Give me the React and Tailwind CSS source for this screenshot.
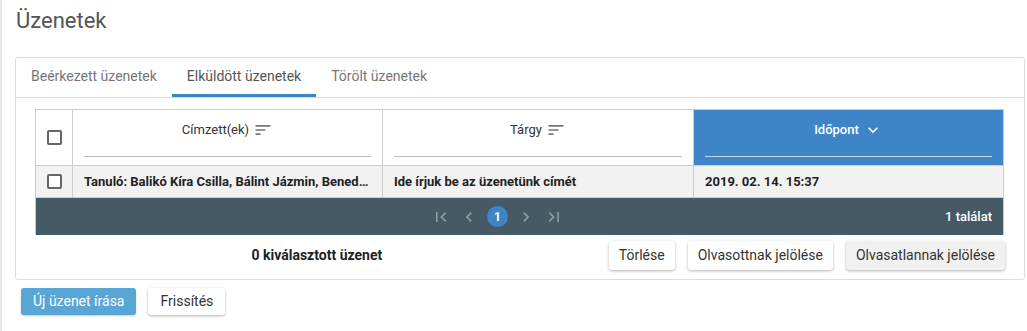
import React from 'react';

const SortIcon = () => (
  <svg width="20" height="20" viewBox="0 0 24 24" className="fill-[#777]">
    <path d="M3 18h6v-2H3v2zM3 6v2h18V6H3zm0 7h12v-2H3v2z" />
  </svg>
);

const ChevronDown = () => (
  <svg width="20" height="20" viewBox="0 0 24 24" className="fill-white">
    <path d="M16.59 8.59L12 13.17 7.41 8.59 6 10l6 6 6-6z" />
  </svg>
);

const PageIcon = ({ d }) => (
  <svg width="20" height="20" viewBox="0 0 24 24" className="fill-[#8c9ca5]">
    <path d={d} />
  </svg>
);

const Checkbox = () => (
  <div className="w-[15px] h-[15px] border-2 border-[#666] rounded-[2px] bg-white" />
);

function FilterHeader({ label }) {
  return (
    <div className="flex flex-col h-full px-[11px]">
      <div className="flex items-center justify-center gap-[4px] h-[38px] pt-[1px] text-[13px] text-[#333]">
        <span>{label}</span>
        <SortIcon />
      </div>
      <div className="mt-[8px] border-b border-[#bbb]" />
    </div>
  );
}

function Btn({ children, gray }) {
  return (
    <button
      className={
        'h-[29px] px-[10px] rounded-[3px] text-[14px] text-[#333] shadow-[0_1px_3px_rgba(0,0,0,0.3)] ' +
        (gray ? 'bg-[#f1f1f1]' : 'bg-white')
      }
    >
      {children}
    </button>
  );
}

export default function App() {
  const tabs = ['Beérkezett üzenetek', 'Elküldött üzenetek', 'Törölt üzenetek'];

  return (
    <div
      className="min-h-[331px] bg-white border-l-2 border-[#e8e8e8] pl-[13px] pr-[2px]"
      style={{ fontFamily: 'Roboto, "Liberation Sans", sans-serif' }}
    >
      <h1 className="h-[57px] pt-[6px] pl-[1px] text-[22px] leading-[30px] text-[#555]">Üzenetek</h1>

      {/* card */}
      <div className="w-[1010px] border border-[#ddd] rounded-[3px]">
        <div className="flex h-[40px] border-b border-[#ddd]">
          {tabs.map((t, i) => (
            <div
              key={t}
              className={
                'flex items-center px-[15px] text-[14px] border-b-[3px] ' +
                (i === 1 ? 'border-[#3d86c6] text-[#555]' : 'border-transparent text-[#777]')
              }
            >
              {t}
            </div>
          ))}
        </div>

        <div className="px-[19px] pt-[11px] pb-[9px]">
          {/* table */}
          <div className="w-[969px] border-l border-r border-t border-[#ccc]">
            <div className="grid grid-cols-[37px_310px_311px_1fr] h-[56px] border-b border-[#ccc]">
              <div className="flex items-center justify-center border-r border-[#ccc]">
                <Checkbox />
              </div>
              <div className="border-r border-[#ccc]">
                <FilterHeader label="Címzett(ek)" />
              </div>
              <div className="border-r border-[#ccc]">
                <FilterHeader label="Tárgy" />
              </div>
              <div className="flex flex-col px-[11px] bg-[#3d85c6]">
                <div className="flex items-center justify-center gap-[4px] h-[38px] pt-[1px] text-[13px] font-medium text-white">
                  <span>Időpont</span>
                  <ChevronDown />
                </div>
                <div className="mt-[8px] border-b border-[#c8d4de]" />
              </div>
            </div>

            <div className="grid grid-cols-[37px_310px_311px_1fr] h-[32px] bg-[#f2f2f2] text-[13px] font-bold text-[#222] border-b border-[#ccc]">
              <div className="flex items-center justify-center border-r border-[#ccc]">
                <Checkbox />
              </div>
              <div className="flex items-center px-[11px] border-r border-[#ccc] min-w-0">
                <span className="truncate">Tanuló: Balikó Kíra Csilla, Bálint Jázmin, Benedek Gábor, Csonka Lilla</span>
              </div>
              <div className="flex items-center px-[11px] border-r border-[#ccc]">Ide írjuk be az üzenetünk címét</div>
              <div className="flex items-center px-[11px]">2019. 02. 14. 15:37</div>
            </div>

            <div className="relative flex items-center justify-center h-[37px] bg-[#455a64]">
              <div className="flex items-center gap-[8px] mr-[44px]">
                <PageIcon d="M18.41 16.59L13.82 12l4.59-4.59L17 6l-6 6 6 6zM6 6h2v12H6z" />
                <PageIcon d="M15.41 7.41L14 6l-6 6 6 6 1.41-1.41L10.83 12z" />
                <div className="w-[21px] h-[21px] rounded-full bg-[#3d85c6] flex items-center justify-center text-[12px] font-bold text-white">
                  1
                </div>
                <PageIcon d="M10 6L8.59 7.41 13.17 12l-4.58 4.59L10 18l6-6z" />
                <PageIcon d="M5.59 7.41L10.18 12l-4.59 4.59L7 18l6-6-6-6zM16 6h2v12h-2z" />
              </div>
              <span className="absolute right-[11px] text-[13px] font-medium text-white">1 találat</span>
            </div>
          </div>

          <div className="flex items-center mt-[6px]">
            <div className="flex-1 text-center text-[14px] font-bold text-[#222] pr-[10px]">0 kiválasztott üzenet</div>
            <div className="flex gap-[13px]">
              <Btn>Törlése</Btn>
              <Btn>Olvasottnak jelölése</Btn>
              <Btn gray>Olvasatlannak jelölése</Btn>
            </div>
          </div>
        </div>
      </div>

      <div className="flex gap-[12px] mt-[8px] ml-[6px]">
        <button className="h-[27px] px-[12px] rounded-[3px] bg-[#57a6d6] text-[14px] text-white shadow-[0_1px_2px_rgba(0,0,0,0.2)]">
          Új üzenet írása
        </button>
        <button className="h-[27px] px-[12px] rounded-[3px] bg-white text-[14px] text-[#333] shadow-[0_1px_3px_rgba(0,0,0,0.3)]">
          Frissítés
        </button>
      </div>
    </div>
  );
}
